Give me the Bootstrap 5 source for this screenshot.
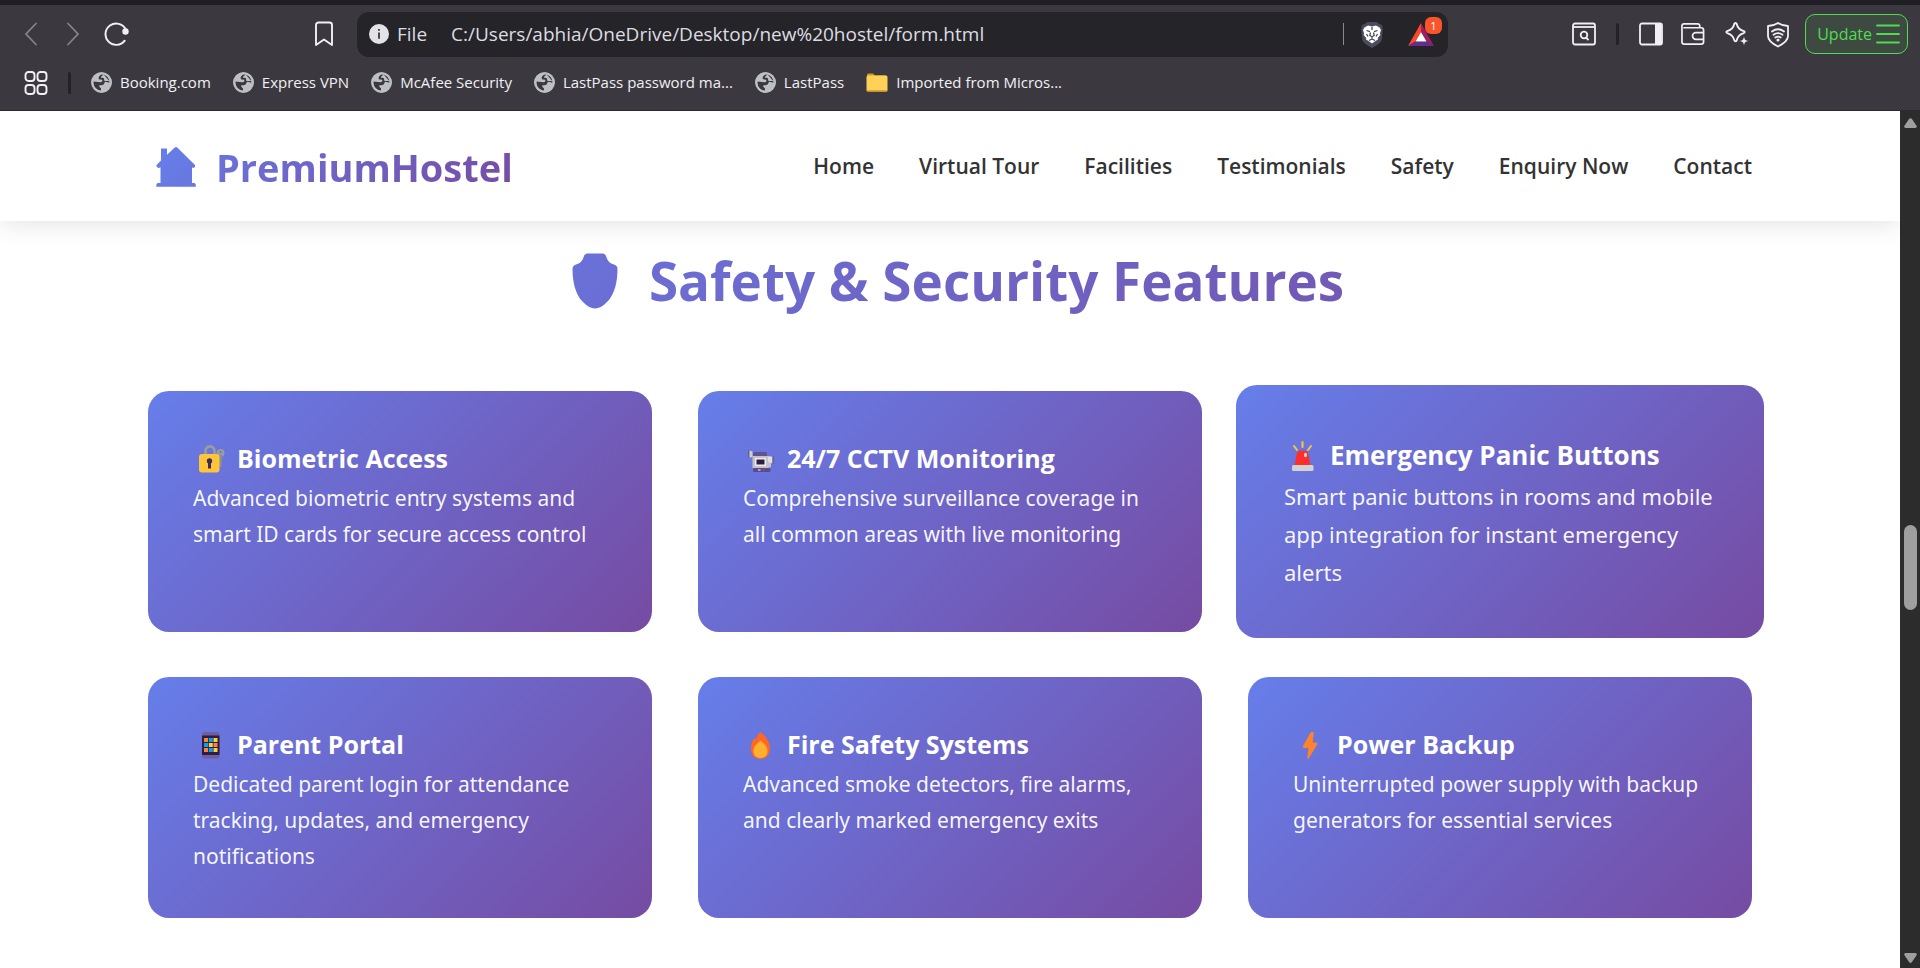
<!DOCTYPE html>
<html lang="en">
<head>
<meta charset="utf-8">
<meta name="viewport" content="width=device-width, initial-scale=1">
<title>PremiumHostel</title>
<link href="https://cdn.jsdelivr.net/npm/bootstrap@5.3.0/dist/css/bootstrap.min.css" rel="stylesheet">
<style>
  body { font-family: "Open Sans", "Noto Sans", sans-serif; background: #fff; color: #333; }
  svg { flex: none; display: block; }

  /* Browser chrome */
  .chrome { background: #3b393f; border-top: 5px solid #1f1e24; border-bottom: 1px solid #2b2a2f; color: #f1f0f4; }
  .toolbar { height: 58px; padding: 0 12px 0 24px; }
  .tools { gap: 18px; }
  .tools .stroke-sep { margin: 0 2px; }
  .icon-btn { background: none; border: 0; padding: 0; color: #f1f0f4; line-height: 0; }
  .icon-btn:disabled { color: #858389; }
  .omnibox { background: #252429; border-radius: 12px; height: 45px; padding: 0 6px 0 12px; width: 1091px; flex-shrink: 1; min-width: 0; font-size: 19px; }
  .omnibox input { background: none; border: 0; outline: 0; color: #dddce1; padding: 0; min-width: 0; }
  .omnibox label { color: #dddce1; }
  .nav-group { width: 333px; }
  .stroke-sep { width: 3px; height: 22px; background: #232227; border-radius: 2px; }
  .thin-sep { width: 1px; height: 22px; background: #8b898f; }
  .reward-count { top: -6px; right: -8px; width: 17px; height: 17px; border-radius: 6px; background: #fb542b; font-size: 11px; line-height: 17px; color: #fff; }
  .update-btn { height: 40px; padding: 0 7px 0 11px; border: 1px solid #4fdc50; border-radius: 10px; background: #3e4a41; color: #4fdc50; font-size: 16px; }
  .bookmarks { height: 47px; padding: 0 24px 8px; font-size: 15px; }
  .bookmarks a { color: #f1f0f4; text-decoration: none; white-space: nowrap; }
  .bookmarks .stroke-sep { margin: 0 20px; }
  .bookmark-list { gap: 22px; }

  /* Site */
  .site-header { height: 110px; box-shadow: 0 2px 25px rgba(0, 0, 0, .12); z-index: 1; }
  .page-width { padding: 0 148px; }
  .grad-text { background: linear-gradient(135deg, var(--from), var(--to)); -webkit-background-clip: text; background-clip: text; color: transparent; }
  .logo { --from: #6974dc; --to: #764ba2; font-size: 38px; line-height: 52px; font-weight: 700; text-decoration: none; gap: 20px; padding-top: 2px; }
  .menu { gap: 45px; font-size: 21px; font-weight: 600; padding-top: 2px; }
  .menu a { color: #333; text-decoration: none; white-space: nowrap; }
  .section-title { --from: #6b6ed4; --to: #7258b4; font-size: 53px; line-height: 76px; font-weight: 700; }
  .title-row { padding: 22px 0 72px; gap: 31px; }
  .feature-grid { display: grid; grid-template-columns: repeat(3, 1fr); gap: 45px 46px; padding-bottom: 48px; }
  .feature { background: linear-gradient(135deg, #667eea, #764ba2); border-radius: 21px; padding: 46px 45px 44px; color: #fff; font-size: 21px; line-height: 36px; min-height: 241px; }
  .feature h3 { font-size: 25px; line-height: 43px; font-weight: 700; margin: 0; gap: 8px; white-space: nowrap; }
  .feature p { margin: 0; color: rgba(255, 255, 255, .95); font-family: "Noto Sans", sans-serif; }
  .feature.raised { margin: -6px -12px; padding: 49px 48px 47px; font-size: 22px; line-height: 38px; min-height: 253px; }
  .feature.raised h3 { font-size: 26px; line-height: 43px; }

  .scroll-track { width: 20px; background: #2c2c2c; padding: 7px 3px 5px 4px; }
  .scroll-thumb { width: 13px; background: #9f9f9f; border-radius: 7px; flex: 86 1 0; }
</style>
</head>
<body class="d-flex flex-column min-vh-100">

<svg width="0" height="0" class="position-absolute" aria-hidden="true">
  <defs>
    <symbol id="globe" viewBox="0 0 21 21">
      <circle cx="10.500" cy="10.500" r="10.300" fill="#bcbfc4"/>
      <path d="M12 2.300c-2.200.2-3.800 1.300-4.300 3.200-.3 1.200.3 2 1.500 2.100l2 .1c.5 1.600-.2 2.400-1.700 2.500L2.400 9.600C2.100 14.500 5.500 18.600 10 18.800v-2.300l-1.700-1.700v-1.600c2 .1 3.500-.1 4.500-1 .7-.7.500-2.300 1.600-2.500 1.500-.1 2.600.8 4.200.8.200-3.800-2.300-7.300-6.600-8.200z" fill="#3b393f"/>
      <path d="M12.500 2.200c-.7 1.800-2.400 1.300-2.600 3.200.6.600 2.300.1 3 .9.600.8-.3 1.800.5 2.400 1.300.8 3.200 0 5.300.8" fill="#bcbfc4"/>
      <circle cx="10.500" cy="10.500" r="9.300" fill="none" stroke="#bcbfc4" stroke-width="2"/>
    </symbol>
    <linearGradient id="logoFill" x1="0" y1="0" x2="1" y2="1"><stop stop-color="#667eea"/><stop offset="1" stop-color="#6976de"/></linearGradient>
    <linearGradient id="shieldFill" x1="0" y1="0" x2="1" y2="1"><stop stop-color="#6a71d9"/><stop offset="1" stop-color="#6b6ed3"/></linearGradient>
  </defs>
</svg>

<div class="chrome">
  <div class="toolbar d-flex align-items-center">
    <div class="nav-group d-flex align-items-center">
      <button class="icon-btn" disabled aria-label="Back"><svg width="14" height="24" viewBox="0 0 14 24" fill="none" stroke="currentColor" stroke-width="1.800" stroke-linecap="round"><path d="M12 1.500 2 12l10 10.500"/></svg></button>
      <button class="icon-btn ms-4 ps-1" disabled aria-label="Forward"><svg width="14" height="24" viewBox="0 0 14 24" fill="none" stroke="currentColor" stroke-width="1.800" stroke-linecap="round"><path d="M2 1.500 12 12 2 22.500"/></svg></button>
      <button class="icon-btn ms-4" aria-label="Reload"><svg width="26" height="24" viewBox="0 0 26 24" fill="none" stroke="currentColor" stroke-width="1.900" stroke-linecap="round"><path d="M20.700 18.700A10.700 10.700 0 1 1 21.700 7.300"/><circle cx="21.500" cy="9.500" r="3.200" fill="currentColor" stroke="none"/></svg></button>
      <button class="icon-btn ms-auto me-4" aria-label="Bookmark this page"><svg width="18" height="26" viewBox="0 0 18 26" fill="none" stroke="currentColor" stroke-width="1.900" stroke-linejoin="round"><path d="M1 4a2.500 2.500 0 0 1 2.500-2.500h11A2.500 2.500 0 0 1 17 4v20l-8-5.500L1 24z"/></svg></button>
    </div>
    <div class="omnibox d-flex align-items-center">
      <svg width="20" height="20" viewBox="0 0 20 20"><circle cx="10" cy="10" r="10" fill="#e3e2e7"/><path d="M10 8.500v6.300M10 5v1.800" stroke="#252429" stroke-width="1.600"/></svg>
      <label for="url" class="ms-2">File</label>
      <input id="url" class="flex-grow-1 ms-4" type="text" value="C:/Users/abhia/OneDrive/Desktop/new%20hostel/form.html">
      <span class="thin-sep"></span>
      <button class="icon-btn ms-3" aria-label="Shields"><svg width="24" height="27" viewBox="0 0 24 27">
        <path d="M7 1h10l2 2 3 1 .8 4-1 10c-.4 2.600-2 4-4 5.400L12 27l-5.800-3.600c-2-1.400-3.600-2.800-4-5.400L1.200 8 2 4l3-1z" fill="#4a4b5e"/>
        <path d="M8 4.500 12 5.500l4-1 3.500 2L21 9l-1 3 .3 2-2.500 3 .2 1.500L15.500 20 12 22.500 8.500 20 6 18.500 6.200 17l-2.500-3L4 12 3 9l1.500-2.500z" fill="#fff"/>
        <path d="M6.500 9.500 10 10.700M17.500 9.500 14 10.700M10.500 11.500l-.7 3 2.200 1.300 2.200-1.300-.7-3M12 16v2M6.500 13l1.500 2.500M17.500 13 16 15.500M9 19.500l3-1.500 3 1.500M12 6v3" stroke="#4a4b5e" stroke-width="1.300" fill="none"/>
      </svg></button>
      <button class="icon-btn ms-4 me-2 position-relative" aria-label="Rewards"><svg width="26" height="23" viewBox="0 0 26 23">
        <path d="M13 0 0 23l7.500-4.500L13 9z" fill="#ff4724"/><path d="M13 0l13 23-7.500-4.500L13 9z" fill="#9e1f63"/><path d="M0 23h26l-7.500-4.500h-11z" fill="#662d91"/><path d="m13 9 5.500 9.500h-11z" fill="#fff"/>
      </svg><span class="reward-count position-absolute text-center">1</span></button>
    </div>
    <div class="tools d-flex align-items-center ms-auto">
      <button class="icon-btn" aria-label="Search tabs"><svg width="24" height="24" viewBox="0 0 24 24" fill="none" stroke="currentColor" stroke-width="1.800"><rect x="1" y="1.500" width="22" height="21" rx="2"/><path d="M1 5h22"/><circle cx="12" cy="13" r="3.300"/><path d="m14 15.500 2.500 2.500"/></svg></button>
      <span class="stroke-sep"></span>
      <button class="icon-btn" aria-label="Sidebar"><svg width="24" height="24" viewBox="0 0 24 24" fill="none" stroke="currentColor" stroke-width="1.800"><rect x="1" y="1.500" width="22" height="21" rx="2"/><path d="M16 1.500h6.500v21H16z" fill="currentColor" stroke="none"/></svg></button>
      <button class="icon-btn" aria-label="Wallet"><svg width="24" height="24" viewBox="1 0 25 24" fill="none" stroke="currentColor" stroke-width="1.800" stroke-linejoin="round"><path d="M20.500 5.500V3.500A2 2 0 0 0 18.500 1.500H4a2 2 0 0 0-2 2V20a2.500 2.500 0 0 0 2.500 2.500H22a2.500 2.500 0 0 0 2.500-2.500V8A2.500 2.500 0 0 0 22 5.500H3.500M24.500 10.500H16.500a3.500 3.500 0 0 0 0 7h8"/></svg></button>
      <button class="icon-btn" aria-label="Assistant"><svg width="26" height="26" viewBox="0 0 26 26"><path d="M12.500 2c.6 0 1 .3 1.200.9 1 4 2.300 5.700 6.500 6.900 2 .6 2 1.900 0 2.500-4.200 1.200-5.500 2.900-6.500 6.900-.4 1.500-2 1.500-2.400 0-1-4-2.300-5.700-6.500-6.900-2-.6-2-1.900 0-2.500 4.200-1.200 5.500-2.900 6.500-6.900.2-.6.600-.9 1.200-.9z" fill="none" stroke="currentColor" stroke-width="1.900"/><path d="m21 15.500 1.300 3.200 3.200 1.300-3.200 1.300L21 24.500l-1.300-3.200-3.200-1.300 3.200-1.300z" fill="currentColor" stroke="#3b393f" stroke-width=".5"/></svg></button>
      <button class="icon-btn" aria-label="VPN"><svg width="22" height="27" viewBox="1 0 22 27" fill="none" stroke="currentColor" stroke-width="1.800" stroke-linecap="round" stroke-linejoin="round"><path d="M12 2c3 2 6 3 10 3v10c0 4-5 8-10 10.500C7 23 2 19 2 15V5c4 0 7-1 10-3z"/><path d="M6 10.500q6-4.500 12 0M7.500 13.700q4.500-3.200 9 0M9.300 16.500q2.700-1.800 5.400 0"/><circle cx="12" cy="19" r=".7" fill="currentColor"/></svg></button>
    </div>
    <button class="update-btn d-flex align-items-center ms-3"><span>Update</span><svg class="ms-1" width="24" height="20" viewBox="0 0 24 20" stroke="currentColor" stroke-width="1.900" stroke-linecap="round"><path d="M1 1.500h22M1 10h22M1 18.500h22"/></svg></button>
  </div>
  <nav class="bookmarks d-flex align-items-center" aria-label="Bookmarks">
    <button class="icon-btn" aria-label="All bookmarks"><svg width="24" height="24" viewBox="0 0 24 24" fill="none" stroke="currentColor" stroke-width="1.900"><rect x="1.500" y="1" width="9" height="9" rx="3"/><rect x="13.500" y="1" width="9" height="9" rx="3"/><rect x="1.500" y="14" width="9" height="9" rx="3"/><rect x="13.500" y="14" width="9" height="9" rx="3"/></svg></button>
    <span class="stroke-sep"></span>
    <div class="bookmark-list d-flex">
      <a href="#" class="d-flex align-items-center gap-2"><svg width="21" height="21"><use href="#globe"/></svg>Booking.com</a>
      <a href="#" class="d-flex align-items-center gap-2"><svg width="21" height="21"><use href="#globe"/></svg>Express VPN</a>
      <a href="#" class="d-flex align-items-center gap-2"><svg width="21" height="21"><use href="#globe"/></svg>McAfee Security</a>
      <a href="#" class="d-flex align-items-center gap-2"><svg width="21" height="21"><use href="#globe"/></svg>LastPass password ma...</a>
      <a href="#" class="d-flex align-items-center gap-2"><svg width="21" height="21"><use href="#globe"/></svg>LastPass</a>
      <a href="#" class="d-flex align-items-center gap-2"><svg width="22" height="19" viewBox="0 0 22 19"><path d="M1 2a1.500 1.500 0 0 1 1.500-1.500H7L9 2.500h11V8H1z" fill="#d79b16"/><rect x=".5" y="2.500" width="21" height="16" rx="1.500" fill="#ffd257"/><path d="M.5 17h21a1.500 1.500 0 0 1-1.500 1.500H2A1.500 1.500 0 0 1 .5 17z" fill="#e0a52a"/></svg>Imported from Micros...</a>
    </div>
  </nav>
</div>

<div class="d-flex flex-grow-1">
  <div class="flex-grow-1 overflow-hidden">
    <header class="site-header page-width d-flex align-items-center justify-content-between position-relative bg-white">
      <a href="#" class="logo d-flex align-items-center">
        <svg class="ms-2" width="40" height="40" viewBox="0 0 40 40" fill="url(#logoFill)"><path d="M5 1.500h6v6.300L18.500.7q1.500-1.200 3 0L39 18v1.500q-1 2.500-3 .8V36h2.500q1.300.8 1.300 2v1.800H.3V38q0-1.200 1.400-2H4.500V20.300q-2.500 1.500-4-.8V18L5 13.500z"/></svg>
        <span class="grad-text">PremiumHostel</span>
      </a>
      <nav class="menu d-flex" aria-label="Main">
        <a href="#">Home</a>
        <a href="#">Virtual Tour</a>
        <a href="#">Facilities</a>
        <a href="#">Testimonials</a>
        <a href="#">Safety</a>
        <a href="#">Enquiry Now</a>
        <a href="#">Contact</a>
      </nav>
    </header>

    <main class="page-width">
      <div class="title-row d-flex align-items-center justify-content-center">
        <svg class="ms-3" width="46" height="56" viewBox="0 0 46 56" fill="url(#shieldFill)"><path d="M15 .5h16q2 0 3 2.500 2 7.500 8 8.500 3.500 1 3.500 4.500c0 13-3 25.500-10 32.500Q29 55.500 23 55.500T10.500 48.500C3.500 41.500.5 29 .5 16q0-3.500 3.500-4.500 6-1 8-8.500 1-2.500 3-2.500z"/></svg>
        <h2 class="section-title grad-text m-0">Safety &amp; Security Features</h2>
      </div>
      <div class="feature-grid">
        <article class="feature">
          <h3 class="d-flex align-items-center">
            <svg width="36" height="30" viewBox="0 0 36 30"><g fill="none" stroke="#9b9b9b" stroke-width="2.800"><path d="M12.500 11V7a4.500 4.500 0 0 1 9 0v4"/></g><circle cx="27.500" cy="9" r="4" fill="#9b9b9b"/><path d="M26 11h3v11l-1.500 1.500L26 22z" fill="#8b8b98"/><circle cx="27.500" cy="8" r="1" fill="#6a6ccb"/><rect x="6" y="10" width="20.500" height="18.500" rx="3" fill="#ffc53a"/><circle cx="16.500" cy="17" r="2.700" fill="#3d2c53"/><path d="M15 17h3v7.500h-3z" fill="#3d2c53"/></svg>
            Biometric Access</h3>
          <p>Advanced biometric entry systems and smart ID cards for secure access control</p>
        </article>
        <article class="feature">
          <h3 class="d-flex align-items-center">
            <svg width="36" height="30" viewBox="0 0 36 30"><rect x="10" y="8" width="14" height="6" rx="1.500" fill="#5f548f"/><path d="M5 6l4.500 1.500V13L5 14z" fill="#d0d0d0"/><path d="M5 6h1.500v8H5z" fill="#6b6291"/><path d="M9.500 12h15l3.500 1v10l-3.500 1h-15z" fill="#c4c4c6"/><path d="M25 12.500h4.500v7L25 18z" fill="#e0e0e0"/><path d="M29.500 12H31v8h-1.500z" fill="#6b6291"/><rect x="12" y="14" width="11" height="8" fill="#eee"/><rect x="13.500" y="15.500" width="8" height="5" fill="#2e1c44"/><rect x="10" y="24" width="17.500" height="4" rx="1.500" fill="#5b4b8a"/><path d="M15 26h2.500" stroke="#ddd" stroke-width="1.200"/><path d="M20 26h2" stroke="#c04a6a" stroke-width="1.200"/></svg>
            24/7 CCTV Monitoring</h3>
          <p>Comprehensive surveillance coverage in all common areas with live monitoring</p>
        </article>
        <article class="feature raised">
          <h3 class="d-flex align-items-center">
            <svg width="38" height="32" viewBox="0 0 38 32"><path d="M18.500 2v5M10 6l3 4M27 6l-3 4" stroke="#ffc53a" stroke-width="2" stroke-linecap="round"/><path d="M10.500 26l2.200-12q1-3.500 4-3.500h3.600q3 0 4 3.500l2.200 12z" fill="#fc2f2b"/><ellipse cx="21.500" cy="15" rx="1.500" ry="2.300" fill="#fbd8d8"/><rect x="8" y="25" width="21.500" height="6" rx="1.500" fill="#d3d3d6"/></svg>
            Emergency Panic Buttons</h3>
          <p>Smart panic buttons in rooms and mobile app integration for instant emergency alerts</p>
        </article>
        <article class="feature">
          <h3 class="d-flex align-items-center">
            <svg width="36" height="30" viewBox="0 0 36 30"><rect x="9" y="2" width="17.500" height="26.500" rx="2.500" fill="#6e5f9e"/><rect x="9" y="5.500" width="17.500" height="19.500" fill="#2e1c44"/><path fill="#ff822d" d="M11 8h4v4h-4zM20.500 13h4v4h-4zM11 18h4v4h-4z"/><path fill="#00a6ed" d="M15.800 8h4v4h-4zM11 13h4v4h-4zM15.800 18h4v4h-4z"/><path fill="#ffcf3f" d="M20.500 8h4v4h-4zM15.800 13h4v4h-4zM20.500 18h4v4h-4z"/></svg>
            Parent Portal</h3>
          <p>Dedicated parent login for attendance tracking, updates, and emergency notifications</p>
        </article>
        <article class="feature">
          <h3 class="d-flex align-items-center">
            <svg width="36" height="30" viewBox="0 0 36 30"><path d="M17.500 2c6 5 9.500 10.500 9.500 16.500 0 6-4 10.500-9.500 10.500S8 25 8 18.500C8 14.500 9 10.500 11.500 8l1.500 2c.5-3.500 2-6.500 4.500-8z" fill="#ff6723"/><path d="M17.500 10.500c4.500 4 7 6.500 7 10.500 0 4.500-3 7-7 7s-7-2.500-7-7c0-4 2.500-6.500 7-10.500z" fill="#ffb02e"/></svg>
            Fire Safety Systems</h3>
          <p>Advanced smoke detectors, fire alarms, and clearly marked emergency exits</p>
        </article>
        <article class="feature">
          <h3 class="d-flex align-items-center">
            <svg width="36" height="30" viewBox="0 0 36 30"><path d="M18.500 2h1.500q1 .3.800 1.200L19.500 12.500h4q1.500.5.800 1.800L16 28q-1 1.200-1.800.2L15.500 18H11q-1.700-.4-1-2L17.200 3z" fill="#ff822d"/></svg>
            Power Backup</h3>
          <p>Uninterrupted power supply with backup generators for essential services</p>
        </article>
      </div>
    </main>
  </div>

  <div class="scroll-track d-flex flex-column flex-shrink-0" aria-hidden="true">
    <svg width="13" height="10" viewBox="0 0 13 10"><path d="M5.200.8q1.300-1.200 2.600 0L12.700 8q.4 1.700-1.200 2h-10Q-.1 9.700.3 8z" fill="#9f9f9f"/></svg>
    <div style="flex: 397 1 0"></div>
    <div class="scroll-thumb"></div>
    <div style="flex: 343 1 0"></div>
    <svg width="13" height="10" viewBox="0 0 13 10"><path d="M5.200 9.200q1.300 1.200 2.600 0L12.700 2q.4-1.700-1.200-2h-10Q-.1.300.3 2z" fill="#9f9f9f"/></svg>
  </div>
</div>

<script src="https://cdn.jsdelivr.net/npm/bootstrap@5.3.0/dist/js/bootstrap.bundle.min.js"></script>
</body>
</html>
